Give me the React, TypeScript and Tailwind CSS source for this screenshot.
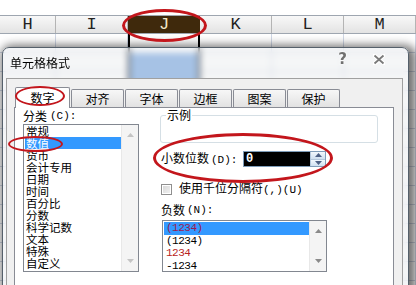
import React from "react";

const cjk = "font-['Noto_Sans_CJK_SC','Noto_Sans',sans-serif]";
const mono = "font-['Liberation_Mono','DejaVu_Sans_Mono',monospace]";

const columns = [
  { label: "H", width: "w-[56px]" },
  { label: "I", width: "w-[72px]" },
  { label: "J", width: "w-[72px]" },
  { label: "K", width: "w-[72px]" },
  { label: "L", width: "w-[72px]" },
  { label: "M", width: "w-[72px]" },
];

const categories = [
  "常规",
  "数值",
  "货币",
  "会计专用",
  "日期",
  "时间",
  "百分比",
  "分数",
  "科学记数",
  "文本",
  "特殊",
  "自定义",
];

const negatives = [
  { text: "(1234)", color: "text-[#9a1a52]", selected: true },
  { text: "(1234)", color: "text-black", selected: false },
  { text: "1234", color: "text-[#b82424]", selected: false },
  { text: "-1234", color: "text-black", selected: false },
];

const tabs = ["对齐", "字体", "边框", "图案", "保护"];

function Arrow({ up, color = "#9a9a9a" }: { up?: boolean; color?: string }) {
  return (
    <svg width="7" height="4" viewBox="0 0 7 4">
      <polygon points={up ? "3.5,0 7,4 0,4" : "0,0 7,0 3.5,4"} fill={color} />
    </svg>
  );
}

function Scrollbar({ color }: { color: string }) {
  return (
    <div className="w-[17px] h-full bg-[#f4f4f4] border-l border-[#e8e8e8] flex flex-col justify-between">
      <div className="h-[20px] flex items-center justify-center">
        <Arrow up color={color} />
      </div>
      <div className="h-[20px] flex items-center justify-center">
        <Arrow color={color} />
      </div>
    </div>
  );
}

function Sheet() {
  return (
    <div className="flex flex-col">
      <div className="h-[15px] bg-white" />
      {/* column headers */}
      <div className="flex h-[19px] border-y border-[#9ea6b0] bg-gradient-to-b from-[#f8f8f8] to-[#e3e3e3]">
        {columns.map((c) =>
          c.label === "J" ? (
            <div
              key={c.label}
              className={`${c.width} shrink-0 flex items-center justify-center bg-[#3f290c] text-[#f3e6c8] text-[17px] ${mono}`}
            >
              {c.label}
            </div>
          ) : (
            <div
              key={c.label}
              className={`${c.width} shrink-0 flex items-center justify-center border-r border-[#b4b4b4] text-[#222] text-[17px] ${mono}`}
            >
              {c.label}
            </div>
          )
        )}
      </div>
      {/* rows */}
      {Array.from({ length: 14 }).map((_, r) => (
        <div key={r} className="flex h-[19px]">
          {columns.map((c) =>
            c.label === "J" ? (
              <div
                key={c.label}
                className={`${c.width} shrink-0 border-x-2 border-black ${r === 0 ? "bg-white" : "bg-[#86b0e4]"}`}
              />
            ) : (
              <div key={c.label} className={`${c.width} shrink-0 border-r border-b border-[#d0d7e5]`} />
            )
          )}
        </div>
      ))}
    </div>
  );
}

function Dialog() {
  return (
    <div className="absolute left-[2px] top-[47px] w-[407px] h-[250px] rounded-t-[7px] border border-[#55606b] bg-[rgba(226,228,232,0.35)] backdrop-blur-[3px] shadow-[3px_2px_10px_4px_rgba(0,0,0,0.55)] flex flex-col">
      {/* title bar */}
      <div className="h-[30px] shrink-0 flex items-start">
        <span className={`mt-[8px] ml-[7px] text-[12px] leading-[14px] text-black ${cjk}`}>单元格格式</span>
        <div className="ml-auto mt-[4px] mr-[23px] flex items-center gap-[26px]">
          <span className="text-[15px] leading-[14px] font-bold text-[#707070] [text-shadow:0_0_2px_#fff,0_0_2px_#fff] font-['DejaVu_Sans',sans-serif]">
            ?
          </span>
          <svg width="12" height="11" viewBox="0 0 12 11">
            <path d="M1 1 L11 10 M11 1 L1 10" stroke="#ffffff" strokeWidth="4" strokeLinecap="round" />
            <path d="M1.5 1.5 L10.5 9.5 M10.5 1.5 L1.5 9.5" stroke="#7a7a7a" strokeWidth="1.8" />
          </svg>
        </div>
      </div>

      {/* client area */}
      <div className="flex-1 ml-[3px] mr-[5px] border-x border-t border-[#a0a0a0] bg-[#f0f0f0] pt-[8px] pl-[7px] pr-[8px] flex flex-col">
        {/* tabs */}
        <div className={`flex items-end h-[20px] text-[12px] text-black ${cjk}`}>
          <div className="relative z-10 -mb-[1px] ml-[1px] w-[55px] h-[21px] bg-white border border-b-0 border-[#898c95] rounded-t-[2px] flex items-center justify-center leading-none">
            数字
          </div>
          {tabs.map((t) => (
            <div
              key={t}
              className="ml-[1px] w-[53px] h-[18px] border border-b-0 border-[#898c95] rounded-t-[2px] bg-gradient-to-b from-[#f7f7f7] to-[#e2e2e2] flex items-center justify-center leading-none"
            >
              {t}
            </div>
          ))}
        </div>

        {/* tab panel */}
        <div className={`flex-1 border border-[#898c95] bg-white flex pl-[8px] gap-[21px] text-[12px] text-black ${cjk}`}>
          {/* left: category */}
          <div className="w-[116px] flex flex-col">
            <div className="h-[16px] flex items-center leading-none">
              分类<span className={`ml-[3px] ${mono} text-[11px]`}>(C):</span>
            </div>
            <div className="h-[148px] border border-[#828790] flex">
              <div className="flex-1 pl-[1px] overflow-hidden text-[11.5px]">
                {categories.map((c) => (
                  <div
                    key={c}
                    className={`h-[12px] leading-[12px] pl-[1px] whitespace-nowrap ${c === "数值" ? "bg-[#3399ff] text-white" : ""}`}
                  >
                    {c}
                  </div>
                ))}
              </div>
              <Scrollbar color="#c4c4c4" />
            </div>
          </div>

          {/* right: options */}
          <div className="w-[218px] flex flex-col">
            <fieldset className="mt-[1px] h-[34px] border border-[#d5dfe5] rounded-[3px]">
              <legend className="ml-[5px] px-[1px] text-[12px] leading-[12px]">示例</legend>
            </fieldset>

            <div className="mt-[8px] h-[16px] flex items-center">
              <span className="ml-[1px] w-[82px] leading-none whitespace-nowrap">
                小数位数<span className={`ml-[2px] ${mono} text-[11px]`}>(D):</span>
              </span>
              <div className="w-[83px] h-[16px] border border-[#7f9db9] flex bg-white">
                <div className="flex-1 bg-black flex items-center pl-[2px]">
                  <span className={`text-white text-[12px] leading-none font-bold ${mono}`}>0</span>
                </div>
                <div className="w-[15px] flex flex-col border-l border-[#b4c8dc]">
                  <div className="flex-1 bg-gradient-to-b from-[#f2f8fd] to-[#cfe0f0] flex items-center justify-center border-b border-[#b4c8dc]">
                    <Arrow up color="#4d6185" />
                  </div>
                  <div className="flex-1 bg-gradient-to-b from-[#f2f8fd] to-[#cfe0f0] flex items-center justify-center">
                    <Arrow color="#4d6185" />
                  </div>
                </div>
              </div>
            </div>

            <div className="mt-[16px] h-[12px] flex items-center">
              <div className="ml-[1px] w-[11px] h-[11px] border border-[#8f8f8f] bg-white p-[1px]">
                <div className="w-full h-full bg-gradient-to-br from-[#d8d8d8] to-[#f0f0f0]" />
              </div>
              <span className="ml-[7px] leading-none whitespace-nowrap">
                使用千位分隔符<span className={`${mono} text-[11px]`}>(,)(U)</span>
              </span>
            </div>

            <div className="mt-[9px] h-[12px] flex items-center leading-none">
              <span className="ml-[1px]">负数</span>
              <span className={`ml-[2px] ${mono} text-[11px]`}>(N):</span>
            </div>

            <div className="mt-[4px] ml-[2px] w-[165px] h-[52px] border border-[#828790] flex">
              <div className={`flex-1 pt-[1px] pl-[1px] ${mono} text-[11px] tracking-[-0.5px]`}>
                {negatives.map((n, i) => (
                  <div
                    key={i}
                    className={`h-[12.5px] leading-[12.5px] pl-[2px] ${n.color} ${n.selected ? "bg-[#3399ff]" : ""}`}
                  >
                    {n.text}
                  </div>
                ))}
              </div>
              <Scrollbar color="#8a8a8a" />
            </div>
          </div>
        </div>
      </div>
    </div>
  );
}

export default function App() {
  return (
    <div className="relative w-[416px] h-[285px] overflow-hidden bg-white">
      <Sheet />
      <Dialog />

      {/* red annotation circles */}
      <div className="absolute left-[122px] top-[9px] w-[85px] h-[33px] rounded-[50%] border-[3px] border-[#c3161c]" />
      <div className="absolute left-[15px] top-[86px] w-[50px] h-[20px] rounded-[50%] border-[2px] border-[#c3161c]" />
      <div className="absolute left-[8px] top-[136px] w-[55px] h-[16px] rounded-[50%] border-[2px] border-[#c3161c]" />
      <div className="absolute left-[153px] top-[133px] w-[180px] h-[50px] rounded-[50%] border-[3px] border-[#c3161c]" />
    </div>
  );
}
